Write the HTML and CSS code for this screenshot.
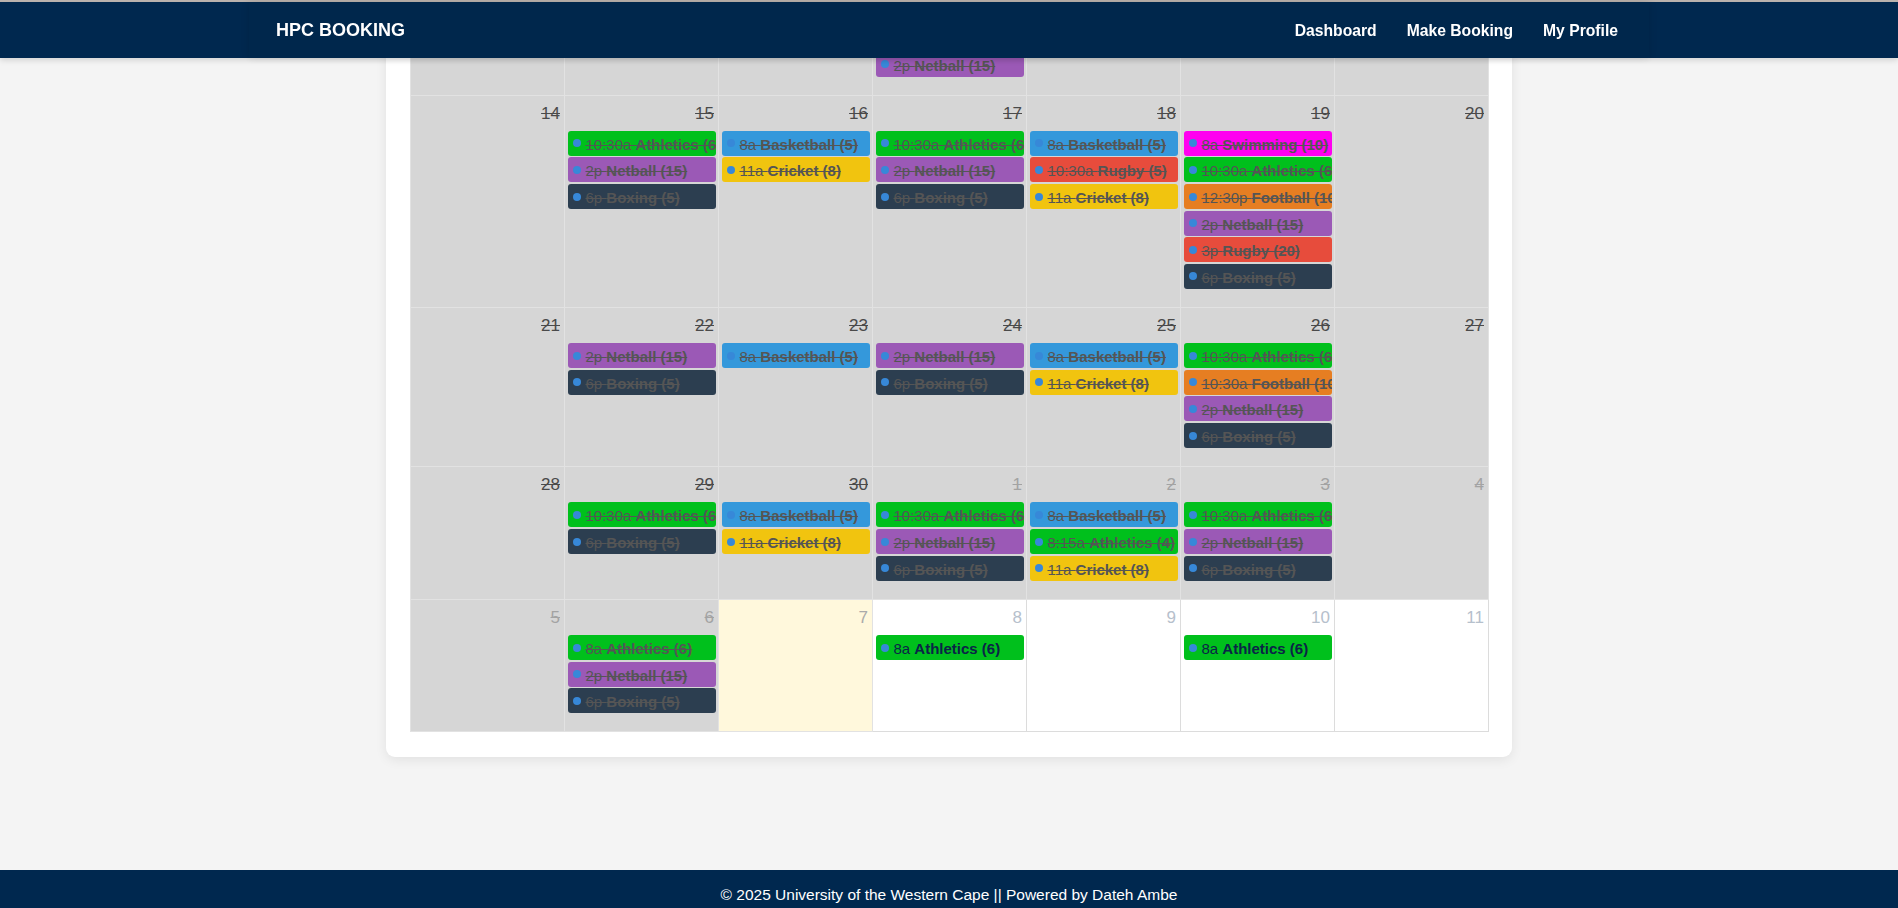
FILE: index.html
```html
<!DOCTYPE html>
<html lang="en">
<head>
<meta charset="utf-8">
<title>HPC Booking</title>
<link rel="stylesheet" href="styles.css">
</head>
<body>
<header class="navbar">
  <div class="nav-inner">
    <div class="brand">HPC BOOKING</div>
    <nav class="nav-links">
      <a href="#">Dashboard</a>
      <a href="#">Make Booking</a>
      <a href="#">My Profile</a>
    </nav>
  </div>
</header>

<main class="page">
  <section class="card">
    <div class="cal">
      <!-- partial week (scrolled) -->
      <div class="day partial"></div>
      <div class="day partial"></div>
      <div class="day partial"></div>
      <div class="day partial"><div class="events"><div class="ev net"><span class="dot"></span><span class="ev-text">2p <b>Netball (15)</b></span></div></div></div>
      <div class="day partial"></div>
      <div class="day partial"></div>
      <div class="day partial"></div>

      <!-- week 14-20 -->
      <div class="day"><div class="num">14</div><div class="events"></div></div>
      <div class="day"><div class="num">15</div><div class="events">
        <div class="ev ath"><span class="dot"></span><span class="ev-text">10:30a <b>Athletics (6)</b></span></div>
        <div class="ev net"><span class="dot"></span><span class="ev-text">2p <b>Netball (15)</b></span></div>
        <div class="ev box"><span class="dot"></span><span class="ev-text">6p <b>Boxing (5)</b></span></div>
      </div></div>
      <div class="day"><div class="num">16</div><div class="events">
        <div class="ev bas"><span class="dot"></span><span class="ev-text">8a <b>Basketball (5)</b></span></div>
        <div class="ev cri"><span class="dot"></span><span class="ev-text">11a <b>Cricket (8)</b></span></div>
      </div></div>
      <div class="day"><div class="num">17</div><div class="events">
        <div class="ev ath"><span class="dot"></span><span class="ev-text">10:30a <b>Athletics (6)</b></span></div>
        <div class="ev net"><span class="dot"></span><span class="ev-text">2p <b>Netball (15)</b></span></div>
        <div class="ev box"><span class="dot"></span><span class="ev-text">6p <b>Boxing (5)</b></span></div>
      </div></div>
      <div class="day"><div class="num">18</div><div class="events">
        <div class="ev bas"><span class="dot"></span><span class="ev-text">8a <b>Basketball (5)</b></span></div>
        <div class="ev rug"><span class="dot"></span><span class="ev-text">10:30a <b>Rugby (5)</b></span></div>
        <div class="ev cri"><span class="dot"></span><span class="ev-text">11a <b>Cricket (8)</b></span></div>
      </div></div>
      <div class="day"><div class="num">19</div><div class="events">
        <div class="ev swi"><span class="dot"></span><span class="ev-text">8a <b>Swimming (10)</b></span></div>
        <div class="ev ath"><span class="dot"></span><span class="ev-text">10:30a <b>Athletics (6)</b></span></div>
        <div class="ev foo"><span class="dot"></span><span class="ev-text">12:30p <b>Football (10)</b></span></div>
        <div class="ev net"><span class="dot"></span><span class="ev-text">2p <b>Netball (15)</b></span></div>
        <div class="ev rug"><span class="dot"></span><span class="ev-text">3p <b>Rugby (20)</b></span></div>
        <div class="ev box"><span class="dot"></span><span class="ev-text">6p <b>Boxing (5)</b></span></div>
      </div></div>
      <div class="day"><div class="num">20</div><div class="events"></div></div>

      <!-- week 21-27 -->
      <div class="day"><div class="num">21</div><div class="events"></div></div>
      <div class="day"><div class="num">22</div><div class="events">
        <div class="ev net"><span class="dot"></span><span class="ev-text">2p <b>Netball (15)</b></span></div>
        <div class="ev box"><span class="dot"></span><span class="ev-text">6p <b>Boxing (5)</b></span></div>
      </div></div>
      <div class="day"><div class="num">23</div><div class="events">
        <div class="ev bas"><span class="dot"></span><span class="ev-text">8a <b>Basketball (5)</b></span></div>
      </div></div>
      <div class="day"><div class="num">24</div><div class="events">
        <div class="ev net"><span class="dot"></span><span class="ev-text">2p <b>Netball (15)</b></span></div>
        <div class="ev box"><span class="dot"></span><span class="ev-text">6p <b>Boxing (5)</b></span></div>
      </div></div>
      <div class="day"><div class="num">25</div><div class="events">
        <div class="ev bas"><span class="dot"></span><span class="ev-text">8a <b>Basketball (5)</b></span></div>
        <div class="ev cri"><span class="dot"></span><span class="ev-text">11a <b>Cricket (8)</b></span></div>
      </div></div>
      <div class="day"><div class="num">26</div><div class="events">
        <div class="ev ath"><span class="dot"></span><span class="ev-text">10:30a <b>Athletics (6)</b></span></div>
        <div class="ev foo"><span class="dot"></span><span class="ev-text">10:30a <b>Football (10)</b></span></div>
        <div class="ev net"><span class="dot"></span><span class="ev-text">2p <b>Netball (15)</b></span></div>
        <div class="ev box"><span class="dot"></span><span class="ev-text">6p <b>Boxing (5)</b></span></div>
      </div></div>
      <div class="day"><div class="num">27</div><div class="events"></div></div>

      <!-- week 28-4 -->
      <div class="day"><div class="num">28</div><div class="events"></div></div>
      <div class="day"><div class="num">29</div><div class="events">
        <div class="ev ath"><span class="dot"></span><span class="ev-text">10:30a <b>Athletics (6)</b></span></div>
        <div class="ev box"><span class="dot"></span><span class="ev-text">6p <b>Boxing (5)</b></span></div>
      </div></div>
      <div class="day"><div class="num">30</div><div class="events">
        <div class="ev bas"><span class="dot"></span><span class="ev-text">8a <b>Basketball (5)</b></span></div>
        <div class="ev cri"><span class="dot"></span><span class="ev-text">11a <b>Cricket (8)</b></span></div>
      </div></div>
      <div class="day"><div class="num other">1</div><div class="events">
        <div class="ev ath"><span class="dot"></span><span class="ev-text">10:30a <b>Athletics (6)</b></span></div>
        <div class="ev net"><span class="dot"></span><span class="ev-text">2p <b>Netball (15)</b></span></div>
        <div class="ev box"><span class="dot"></span><span class="ev-text">6p <b>Boxing (5)</b></span></div>
      </div></div>
      <div class="day"><div class="num other">2</div><div class="events">
        <div class="ev bas"><span class="dot"></span><span class="ev-text">8a <b>Basketball (5)</b></span></div>
        <div class="ev ath"><span class="dot"></span><span class="ev-text">8:15a <b>Athletics (4)</b></span></div>
        <div class="ev cri"><span class="dot"></span><span class="ev-text">11a <b>Cricket (8)</b></span></div>
      </div></div>
      <div class="day"><div class="num other">3</div><div class="events">
        <div class="ev ath"><span class="dot"></span><span class="ev-text">10:30a <b>Athletics (6)</b></span></div>
        <div class="ev net"><span class="dot"></span><span class="ev-text">2p <b>Netball (15)</b></span></div>
        <div class="ev box"><span class="dot"></span><span class="ev-text">6p <b>Boxing (5)</b></span></div>
      </div></div>
      <div class="day"><div class="num other">4</div><div class="events"></div></div>

      <!-- week 5-11 -->
      <div class="day"><div class="num other">5</div><div class="events"></div></div>
      <div class="day"><div class="num other">6</div><div class="events">
        <div class="ev ath"><span class="dot"></span><span class="ev-text">8a <b>Athletics (6)</b></span></div>
        <div class="ev net"><span class="dot"></span><span class="ev-text">2p <b>Netball (15)</b></span></div>
        <div class="ev box"><span class="dot"></span><span class="ev-text">6p <b>Boxing (5)</b></span></div>
      </div></div>
      <div class="day today"><div class="num today-num">7</div><div class="events"></div></div>
      <div class="day future"><div class="num fut">8</div><div class="events">
        <div class="ev ath upcoming"><span class="dot"></span><span class="ev-text">8a <b>Athletics (6)</b></span></div>
      </div></div>
      <div class="day future"><div class="num fut">9</div><div class="events"></div></div>
      <div class="day future"><div class="num fut">10</div><div class="events">
        <div class="ev ath upcoming"><span class="dot"></span><span class="ev-text">8a <b>Athletics (6)</b></span></div>
      </div></div>
      <div class="day future"><div class="num fut">11</div><div class="events"></div></div>
    </div>
  </section>
</main>

<footer class="footer">© 2025 University of the Western Cape || Powered by Dateh Ambe</footer>
</body>
</html>
```

FILE: styles.css
```css
* { box-sizing: border-box; }
html, body { margin: 0; padding: 0; }
body {
  background: #f4f4f4;
  font-family: "Liberation Sans", Arial, sans-serif;
  color: #333;
}

/* top navigation (fixed, lies over scrolled content) */
.navbar {
  position: fixed;
  top: 0;
  left: 0;
  right: 0;
  height: 58px;
  background: #00284f;
  border-top: 2px solid #bab2ad;
  box-shadow: 0 2px 6px rgba(0, 0, 0, 0.15);
  z-index: 10;
}
.nav-inner {
  width: 1400px;
  height: 100%;
  margin: 0 auto;
  padding: 0 31px 0 27px;
  display: flex;
  align-items: center;
  justify-content: space-between;
  background: #00274c;
  box-shadow: 0 0 8px rgba(0, 0, 0, 0.12);
}
.brand {
  color: #fff;
  font-weight: 700;
  font-size: 18px;
  padding-top: 1px;
}
.nav-links {
  display: flex;
  gap: 30px;
  padding-top: 2px;
}
.nav-links a {
  color: #fff;
  font-weight: 700;
  font-size: 15.7px;
  text-decoration: none;
}

/* page */
.page {
  display: flex;
  flex-direction: column;
  align-items: center;
}
.card {
  width: 1126px;
  background: #fff;
  padding: 0 23px 25px 24px;
  border-radius: 0 0 9px 9px;
  box-shadow: 0 3px 12px rgba(0, 0, 0, 0.08);
  margin-bottom: 113px;
}

/* calendar */
.cal {
  display: grid;
  grid-template-columns: repeat(7, minmax(0, 1fr));
  border-left: 1px solid #e2e2e2;
}
.day {
  display: flex;
  flex-direction: column;
  min-width: 0;
  background: #d6d6d6;
  border-right: 1px solid #e2e2e2;
  border-bottom: 1px solid #e2e2e2;
}
.day.partial {
  height: 95.6px;
  justify-content: flex-end;
}
.day.today { background: #fff8dc; }
.day.future { background: #fff; border-color: #dcdcdc; }

.num {
  text-align: right;
  padding: 6px 4px 0 0;
  line-height: 24px;
  font-size: 17px;
  color: #4a4a4a;
  text-decoration: line-through;
}
.num.other { color: #a3a3a3; }
.num.today-num { color: #aaaaaa; text-decoration: none; }
.num.fut { color: #b6c0cc; text-decoration: none; }

.events {
  padding: 5.3px 0 16.5px;
}

.ev {
  display: flex;
  align-items: flex-start;
  height: 25px;
  margin: 0 2px 1.6px 3px;
  padding: 2px 4px 0 4px;
  border-radius: 3px;
  font-size: 15px;
  line-height: 23px;
  white-space: nowrap;
  overflow: hidden;
  color: #555;
}
.dot {
  flex: none;
  width: 8px;
  height: 8px;
  border-radius: 50%;
  background: #3788d8;
  margin: 6.5px 5px 0 0.5px;
}
.ev-text { text-decoration: line-through; }
.ev b { font-weight: 700; }
.ev.upcoming { color: #0b2447; }
.ev.upcoming .ev-text { text-decoration: none; }

.ath { background: #00c01c; }
.net { background: #9b59b6; }
.box { background: #2c3e50; }
.bas { background: #3498db; }
.cri { background: #f1c40f; }
.rug { background: #e74c3c; }
.foo { background: #e67e22; }
.swi { background: #ff00f0; }

/* footer */
.footer {
  background: #00284f;
  color: #fff;
  text-align: center;
  font-size: 15.5px;
  line-height: 20px;
  padding: 15px 0 4px;
}
```
